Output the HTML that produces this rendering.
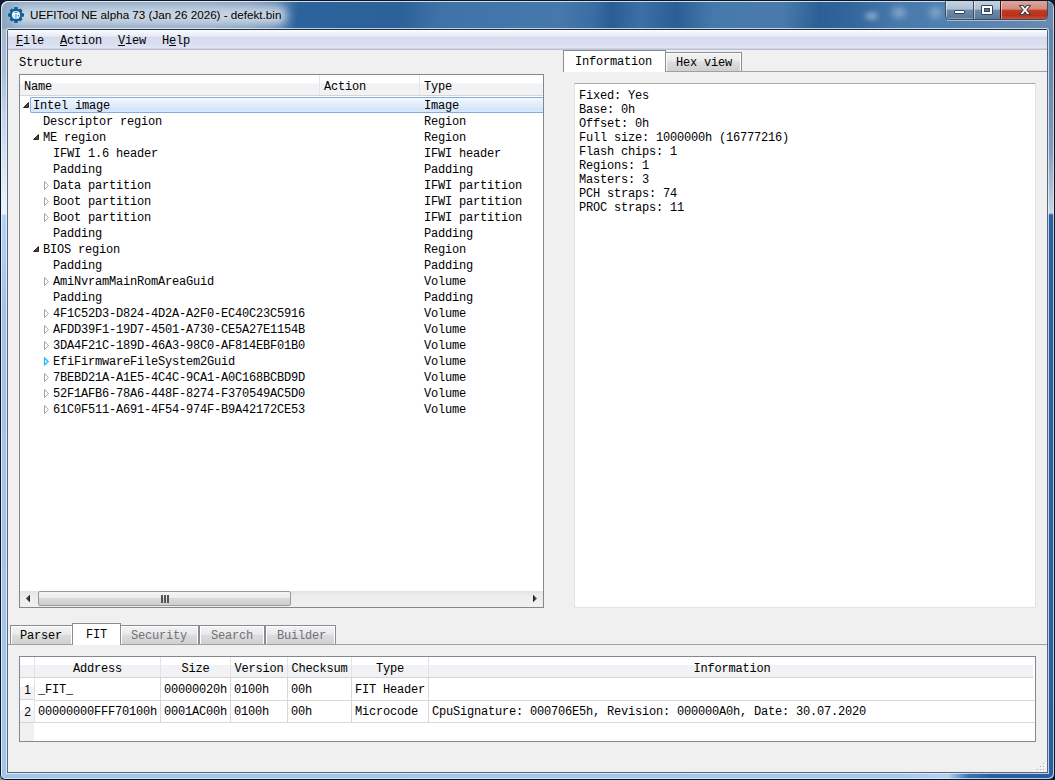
<!DOCTYPE html>
<html><head><meta charset="utf-8">
<style>
*{margin:0;padding:0;box-sizing:border-box}
html,body{width:1055px;height:780px;overflow:hidden;background:#0d1c30}
body{position:relative;font-family:"Liberation Mono",monospace;font-size:12px;letter-spacing:-0.2px;color:#000}
.a{position:absolute}
.t{position:absolute;white-space:pre;line-height:16px;height:16px;margin-top:1px}
.s{font-family:"Liberation Sans",sans-serif;letter-spacing:0;margin-top:0}
/* window frame */
#win{left:0;top:0;width:1055px;height:780px;border-radius:8px 8px 6px 6px;background:#0c1624}
#frame{left:1px;top:1px;width:1053px;height:778px;border-radius:7px 7px 5px 5px;overflow:hidden;background:#a4c5e9}
#title{left:0;top:0;width:1053px;height:28px;overflow:hidden;
 background:linear-gradient(93deg,#8ea7c2 0px,#8da6c2 200px,#7c99bb 250px,#4f7cab 283px,#2d639c 297px,#2c6199 400px,#3f73a8 440px,#4678ab 560px,#3a6da3 592px,#2a5d93 610px,#3b6fa5 640px,#2b5e94 675px,#4679ab 712px,#4a7bac 780px,#2c5f95 818px,#33669c 850px,#4677aa 890px,#4f80b0 940px,#6a8aae 1053px)}
#glow{left:10px;top:5px;width:276px;height:19px;background:#c8d5e3;filter:blur(5px);border-radius:10px}
#lframe{left:0;top:28px;width:6px;height:750px;background:linear-gradient(#a4bad2 0px,#a9bed6 40px,#c8daee 100px,#e6f0fb 170px,#e9f2fc 185px,#b2d3f7 186px,#a3c3e6 280px,#a2c4e8 750px)}
#rframe{left:1047px;top:28px;width:6px;height:750px;background:linear-gradient(#5f84ac 0px,#6c8cb0 60px,#7f9cbc 120px,#c8d6e4 184px,#2862a2 186px,#2660a0 750px)}
#bframe{left:0;top:772px;width:1053px;height:6px;background:linear-gradient(90deg,#a3c5e9 0,#a6c8ec 900px,#b3d2f2 947px,#3a74b0 967px,#2660a0 990px,#2660a0 1053px)}
#hl{left:0;top:0;width:1053px;height:778px;border-radius:7px 7px 5px 5px;box-shadow:inset 1px 1px 0 rgba(235,243,252,.85),inset -1px -1px 0 rgba(220,232,245,.8)}
#client{left:7px;top:29px;width:1041px;height:744px;background:#f0f0f0;border:1px solid #56657a;border-top-color:#1e2e40;border-radius:2px 2px 0 0;box-shadow:0 0 0 1px rgba(236,244,252,.75)}
/* menu */
#menu{left:8px;top:30px;width:1039px;height:20px;background:linear-gradient(#ffffff 0px,#f4f6fb 2px,#e9ecf6 6px,#d6dcee 7px,#dae0f1 15px,#e2e7f5 18px,#b9c0d2 19px,#b9c0d2 20px)}
.mi{top:33px;line-height:14px;height:14px}
.ul{text-decoration:underline;text-underline-offset:1px}
/* tree */
#tree{left:19px;top:74px;width:525px;height:534px;background:#fff;border:1px solid #828790}
#thead{left:20px;top:75px;width:523px;height:21px;background:linear-gradient(#ffffff 0,#ffffff 8px,#f1f2f4 9px,#f1f2f4 20px,#d5d5d5 20px)}
.hsep{width:1px;background:#e3e5e8}
#sel{left:30px;top:97px;width:513px;height:16px;border:1px solid #84acdd;border-right:none;border-radius:2px 0 0 2px;background:linear-gradient(#f3f8fe 0,#e4effc 40%,#d2e4f9 85%,#dcebfb 100%)}
.tri{width:0;height:0}
/* scroll */
#hsb{left:20px;top:591px;width:523px;height:16px;background:linear-gradient(#e3e3e3,#ededed 30%,#f0f0f0)}
#thumb{left:38px;top:591px;width:253px;height:15px;border:1px solid #999;border-radius:2px;background:linear-gradient(#f6f6f6 0,#ececec 45%,#d9d9d9 50%,#cfcfcf 100%)}
/* right tabs */
#tabInfo{left:563px;top:50px;width:103px;height:22px;background:#fff;border:1px solid #898c95;border-bottom:none}
#tabHex{left:665px;top:52px;width:77px;height:19px;border:1px solid #898c95;border-bottom:none;background:linear-gradient(#f2f2f2 0,#ebebeb 45%,#dddddd 50%,#d0d0d0 100%);box-shadow:inset 1px 1px 0 #fff,inset -1px 0 0 #fff}
#info{left:574px;top:83px;width:462px;height:525px;background:#fff;border:1px solid #dfe3ea;border-top:1px solid #a9a9a9}
/* bottom tabs */
.btab{height:19px;top:625px;border:1px solid #898c95;border-bottom:none;background:linear-gradient(#f2f2f2 0,#ebebeb 45%,#dddddd 50%,#d0d0d0 100%);box-shadow:inset 1px 1px 0 #fff,inset -1px 0 0 #fff}
.dis{color:#737078}
/* table */
#tbl{left:19px;top:656px;width:1017px;height:86px;background:#fff;border:1px solid #828790}
</style></head><body>
<div id="win" class="a"></div>
<div class="a" style="left:0;top:772px;width:8px;height:8px;background:#8a8a8a"></div>
<div id="win2" class="a" style="left:0;top:0;width:1055px;height:780px;border-radius:8px 8px 6px 6px;background:#0c1624"></div>
<div id="frame" class="a">
 <div id="title" class="a"><div id="glow" class="a"></div>
  <div class="a" style="left:864px;top:11px;width:13px;height:8px;border-radius:50%;background:rgba(190,210,232,.55);filter:blur(2.5px)"></div>
  <div class="a" style="left:891px;top:6px;width:14px;height:11px;border-radius:50%;background:rgba(190,210,232,.5);filter:blur(3px)"></div>
  <div class="a" style="left:928px;top:6px;width:13px;height:11px;border-radius:50%;background:rgba(190,210,232,.45);filter:blur(3px)"></div>
 </div>
 <div id="lframe" class="a"></div>
 <div id="rframe" class="a"></div>
 <div id="bframe" class="a"></div>
 <div id="hl" class="a"></div>
</div>
<div id="client" class="a"></div>

<!-- title content -->
<svg class="a" style="left:7px;top:6px" width="18" height="18" viewBox="0 0 18 18">
 <g fill="#0e5f9d">
  <circle cx="9" cy="9" r="6.4"/>
  <rect x="7.3" y="1" width="3.4" height="16" rx="0.6"/>
  <rect x="1" y="7.3" width="16" height="3.4" rx="0.6"/>
  <rect x="7.3" y="1.3" width="3.4" height="15.4" rx="0.6" transform="rotate(45 9 9)"/>
  <rect x="7.3" y="1.3" width="3.4" height="15.4" rx="0.6" transform="rotate(-45 9 9)"/>
 </g>
 <circle cx="9" cy="9" r="4.1" fill="#f2f6fa"/>
 <rect x="7.6" y="5.9" width="2.8" height="1" fill="#3d80b5"/>
 <rect x="8.4" y="8" width="1.1" height="4.6" fill="#5d96c2"/>
 <circle cx="11.4" cy="9.7" r="0.8" fill="#1a6aa5"/>
 <path d="M5.4 10.5 Q6.5 8.5 7.6 10.5" stroke="#8fb6d6" stroke-width="0.7" fill="none"/>
</svg>
<div class="t s" style="left:30px;top:7px;font-size:11.67px;line-height:16px;color:#000">UEFITool NE alpha 73 (Jan 26 2026) - defekt.bin</div>

<!-- window buttons -->
<div id="btns" class="a" style="left:945px;top:1px;width:103px;height:19px;border:1px solid #3a4c60;border-top:none;border-radius:0 0 5px 5px;overflow:hidden">
 <div class="a" style="left:0;top:0;width:27px;height:18px;background:linear-gradient(#c5d3e2 0,#aebfd2 45%,#6e8aa8 52%,#5b7898 100%);box-shadow:inset 1px 0 0 rgba(255,255,255,.5),inset 0 -1px 0 rgba(255,255,255,.3)"></div>
 <div class="a" style="left:27px;top:0;width:1px;height:18px;background:#3a4c60"></div>
 <div class="a" style="left:28px;top:0;width:26px;height:18px;background:linear-gradient(#c5d3e2 0,#aebfd2 45%,#6e8aa8 52%,#5b7898 100%);box-shadow:inset 1px 0 0 rgba(255,255,255,.5)"></div>
 <div class="a" style="left:54px;top:0;width:1px;height:18px;background:#3a1010"></div>
 <div class="a" style="left:55px;top:0;width:48px;height:18px;background:linear-gradient(#e0a59c 0,#d38a7e 45%,#c43a22 52%,#b8301c 80%,#c85038 100%);box-shadow:inset 1px 0 0 rgba(255,255,255,.5)"></div>
</div>
<div class="a" style="left:947px;top:20px;width:99px;height:1px;background:rgba(230,240,250,.55)"></div>
<div class="a" style="left:954px;top:10px;width:11px;height:4px;background:#fff;border:1px solid #33475c;border-radius:1px"></div>
<div class="a" style="left:981px;top:5px;width:12px;height:10px;background:#fff;border:1px solid #33475c;border-radius:1px"></div>
<div class="a" style="left:984px;top:8px;width:6px;height:4px;background:#5a7494;border:1px solid #33475c"></div>
<svg class="a" style="left:1018px;top:4px" width="14" height="12" viewBox="0 0 14 12">
 <path d="M1.5 1.5 L5.2 1.5 L7 3.8 L8.8 1.5 L12.5 1.5 L8.9 6 L12.5 10.5 L8.8 10.5 L7 8.2 L5.2 10.5 L1.5 10.5 L5.1 6Z" fill="#fafafa" stroke="#3b4250" stroke-width="1.1" stroke-linejoin="round"/>
</svg>

<!-- menu -->
<div id="menu" class="a"></div>
<div class="t mi" style="left:16px"><span class="ul">F</span>ile</div>
<div class="t mi" style="left:60px"><span class="ul">A</span>ction</div>
<div class="t mi" style="left:118px"><span class="ul">V</span>iew</div>
<div class="t mi" style="left:162px">H<span class="ul">e</span>lp</div>

<div class="t" style="left:19px;top:54px">Structure</div>

<!-- tree -->
<div id="tree" class="a"></div>
<div id="thead" class="a"></div>
<div class="a hsep" style="left:319px;top:75px;height:20px"></div>
<div class="a hsep" style="left:419px;top:75px;height:20px"></div>
<div class="t" style="left:24px;top:78px">Name</div>
<div class="t" style="left:324px;top:78px">Action</div>
<div class="t" style="left:424px;top:78px">Type</div>
<div id="sel" class="a"></div>

<div id="rows">
<div class="t" style="left:33px;top:97px">Intel image</div>
<div class="t" style="left:424px;top:97px">Image</div>
<svg class="a" style="left:23px;top:101px" width="8" height="9"><path d="M5.5 1.5 L5.5 6.5 L0.5 6.5Z" fill="#454545" stroke="#2a2a2a" stroke-width="1" stroke-linejoin="round"/></svg>
<div class="t" style="left:43px;top:113px">Descriptor region</div>
<div class="t" style="left:424px;top:113px">Region</div>
<div class="t" style="left:43px;top:129px">ME region</div>
<div class="t" style="left:424px;top:129px">Region</div>
<svg class="a" style="left:33px;top:133px" width="8" height="9"><path d="M5.5 1.5 L5.5 6.5 L0.5 6.5Z" fill="#454545" stroke="#2a2a2a" stroke-width="1" stroke-linejoin="round"/></svg>
<div class="t" style="left:53px;top:145px">IFWI 1.6 header</div>
<div class="t" style="left:424px;top:145px">IFWI header</div>
<div class="t" style="left:53px;top:161px">Padding</div>
<div class="t" style="left:424px;top:161px">Padding</div>
<div class="t" style="left:53px;top:177px">Data partition</div>
<div class="t" style="left:424px;top:177px">IFWI partition</div>
<svg class="a" style="left:43px;top:180px" width="8" height="11"><path d="M1.5 1.5 L5.5 5.5 L1.5 9.5Z" fill="none" stroke="#a6a6a6" stroke-width="1"/></svg>
<div class="t" style="left:53px;top:193px">Boot partition</div>
<div class="t" style="left:424px;top:193px">IFWI partition</div>
<svg class="a" style="left:43px;top:196px" width="8" height="11"><path d="M1.5 1.5 L5.5 5.5 L1.5 9.5Z" fill="none" stroke="#a6a6a6" stroke-width="1"/></svg>
<div class="t" style="left:53px;top:209px">Boot partition</div>
<div class="t" style="left:424px;top:209px">IFWI partition</div>
<svg class="a" style="left:43px;top:212px" width="8" height="11"><path d="M1.5 1.5 L5.5 5.5 L1.5 9.5Z" fill="none" stroke="#a6a6a6" stroke-width="1"/></svg>
<div class="t" style="left:53px;top:225px">Padding</div>
<div class="t" style="left:424px;top:225px">Padding</div>
<div class="t" style="left:43px;top:241px">BIOS region</div>
<div class="t" style="left:424px;top:241px">Region</div>
<svg class="a" style="left:33px;top:245px" width="8" height="9"><path d="M5.5 1.5 L5.5 6.5 L0.5 6.5Z" fill="#454545" stroke="#2a2a2a" stroke-width="1" stroke-linejoin="round"/></svg>
<div class="t" style="left:53px;top:257px">Padding</div>
<div class="t" style="left:424px;top:257px">Padding</div>
<div class="t" style="left:53px;top:273px">AmiNvramMainRomAreaGuid</div>
<div class="t" style="left:424px;top:273px">Volume</div>
<svg class="a" style="left:43px;top:276px" width="8" height="11"><path d="M1.5 1.5 L5.5 5.5 L1.5 9.5Z" fill="none" stroke="#a6a6a6" stroke-width="1"/></svg>
<div class="t" style="left:53px;top:289px">Padding</div>
<div class="t" style="left:424px;top:289px">Padding</div>
<div class="t" style="left:53px;top:305px">4F1C52D3-D824-4D2A-A2F0-EC40C23C5916</div>
<div class="t" style="left:424px;top:305px">Volume</div>
<svg class="a" style="left:43px;top:308px" width="8" height="11"><path d="M1.5 1.5 L5.5 5.5 L1.5 9.5Z" fill="none" stroke="#a6a6a6" stroke-width="1"/></svg>
<div class="t" style="left:53px;top:321px">AFDD39F1-19D7-4501-A730-CE5A27E1154B</div>
<div class="t" style="left:424px;top:321px">Volume</div>
<svg class="a" style="left:43px;top:324px" width="8" height="11"><path d="M1.5 1.5 L5.5 5.5 L1.5 9.5Z" fill="none" stroke="#a6a6a6" stroke-width="1"/></svg>
<div class="t" style="left:53px;top:337px">3DA4F21C-189D-46A3-98C0-AF814EBF01B0</div>
<div class="t" style="left:424px;top:337px">Volume</div>
<svg class="a" style="left:43px;top:340px" width="8" height="11"><path d="M1.5 1.5 L5.5 5.5 L1.5 9.5Z" fill="none" stroke="#a6a6a6" stroke-width="1"/></svg>
<div class="t" style="left:53px;top:353px">EfiFirmwareFileSystem2Guid</div>
<div class="t" style="left:424px;top:353px">Volume</div>
<svg class="a" style="left:39px;top:352px" width="16" height="19"><defs><radialGradient id="g"><stop offset="0" stop-color="#d8eefb"/><stop offset="1" stop-color="#fff" stop-opacity="0"/></radialGradient></defs><ellipse cx="7" cy="9.5" rx="6.5" ry="7.5" fill="url(#g)"/><path d="M5.5 6 L9.3 9.5 L5.5 13Z" fill="none" stroke="#27b9f1" stroke-width="1.15"/></svg>
<div class="t" style="left:53px;top:369px">7BEBD21A-A1E5-4C4C-9CA1-A0C168BCBD9D</div>
<div class="t" style="left:424px;top:369px">Volume</div>
<svg class="a" style="left:43px;top:372px" width="8" height="11"><path d="M1.5 1.5 L5.5 5.5 L1.5 9.5Z" fill="none" stroke="#a6a6a6" stroke-width="1"/></svg>
<div class="t" style="left:53px;top:385px">52F1AFB6-78A6-448F-8274-F370549AC5D0</div>
<div class="t" style="left:424px;top:385px">Volume</div>
<svg class="a" style="left:43px;top:388px" width="8" height="11"><path d="M1.5 1.5 L5.5 5.5 L1.5 9.5Z" fill="none" stroke="#a6a6a6" stroke-width="1"/></svg>
<div class="t" style="left:53px;top:401px">61C0F511-A691-4F54-974F-B9A42172CE53</div>
<div class="t" style="left:424px;top:401px">Volume</div>
<svg class="a" style="left:43px;top:404px" width="8" height="11"><path d="M1.5 1.5 L5.5 5.5 L1.5 9.5Z" fill="none" stroke="#a6a6a6" stroke-width="1"/></svg>
</div>

<!-- h scrollbar -->
<div id="hsb" class="a"></div>
<div id="thumb" class="a"></div>
<svg class="a" style="left:25px;top:594px" width="6" height="9"><defs><linearGradient id="al" x1="0" x2="1"><stop offset="0" stop-color="#777"/><stop offset="1" stop-color="#151515"/></linearGradient></defs><path d="M5 0.8 L0.6 4.5 L5 8.2Z" fill="url(#al)"/></svg>
<svg class="a" style="left:532px;top:594px" width="6" height="9"><defs><linearGradient id="ar" x1="0" x2="1"><stop offset="0" stop-color="#151515"/><stop offset="1" stop-color="#777"/></linearGradient></defs><path d="M1 0.8 L5.2 4.5 L1 8.2Z" fill="url(#ar)"/></svg>
<div class="a" style="left:161px;top:595px;width:2px;height:8px;background:#555"></div>
<div class="a" style="left:164px;top:595px;width:2px;height:8px;background:#555"></div>
<div class="a" style="left:167px;top:595px;width:2px;height:8px;background:#555"></div>

<!-- right tabs -->
<div class="a" style="left:563px;top:71px;width:484px;height:1px;background:#a0a0a0"></div>
<div id="tabHex" class="a"></div>
<div id="tabInfo" class="a"></div>
<div class="t" style="left:575px;top:53px">Information</div>
<div class="t" style="left:676px;top:54px">Hex view</div>
<div id="info" class="a"></div>
<div class="a" style="left:579px;top:89px;line-height:14px;white-space:pre">Fixed: Yes
Base: 0h
Offset: 0h
Full size: 1000000h (16777216)
Flash chips: 1
Regions: 1
Masters: 3
PCH straps: 74
PROC straps: 11</div>

<!-- bottom tabs -->
<div class="a" style="left:8px;top:644px;width:1039px;height:1px;background:#a0a0a0"></div>
<div class="a btab" style="left:10px;width:63px"></div>
<div class="a btab" style="left:120px;width:79px"></div>
<div class="a btab" style="left:199px;width:66px"></div>
<div class="a btab" style="left:265px;width:71px"></div>
<div class="a" style="left:72px;top:623px;width:49px;height:22px;background:#fff;border:1px solid #898c95;border-bottom:none"></div>
<div class="t" style="left:20px;top:627px">Parser</div>
<div class="t" style="left:86px;top:626px">FIT</div>
<div class="t dis" style="left:131px;top:627px">Security</div>
<div class="t dis" style="left:211px;top:627px">Search</div>
<div class="t dis" style="left:277px;top:627px">Builder</div>

<!-- table -->
<div id="tbl" class="a"></div>
<div id="tblc">
<div class="a" style="left:20px;top:657px;width:1013px;height:21px;background:linear-gradient(#fff 0,#fff 8px,#f1f2f4 8px,#f1f2f4 20px,#d5d5d5 20px)"></div>
<div class="a" style="left:20px;top:678px;width:14px;height:22px;background:linear-gradient(#fff 0,#fff 9px,#f1f2f4 9px,#f1f2f4 21px,#d5d5d5 21px)"></div>
<div class="a" style="left:20px;top:701px;width:14px;height:22px;background:linear-gradient(#fff 0,#fff 9px,#f1f2f4 9px,#f1f2f4 21px,#d5d5d5 21px)"></div>
<div class="a" style="left:20px;top:723px;width:14px;height:18px;background:#f0f0f0"></div>
<div class="a" style="left:35px;top:700px;width:1000px;height:1px;background:#d8d8d8"></div>
<div class="a" style="left:35px;top:722px;width:1000px;height:1px;background:#d8d8d8"></div>
<div class="a" style="left:34px;top:657px;width:1px;height:66px;background:#e2e3e6"></div>
<div class="a" style="left:160px;top:657px;width:1px;height:20px;background:#e2e3e6"></div>
<div class="a" style="left:160px;top:678px;width:1px;height:44px;background:#d8d8d8"></div>
<div class="a" style="left:230px;top:657px;width:1px;height:20px;background:#e2e3e6"></div>
<div class="a" style="left:230px;top:678px;width:1px;height:44px;background:#d8d8d8"></div>
<div class="a" style="left:287px;top:657px;width:1px;height:20px;background:#e2e3e6"></div>
<div class="a" style="left:287px;top:678px;width:1px;height:44px;background:#d8d8d8"></div>
<div class="a" style="left:351px;top:657px;width:1px;height:20px;background:#e2e3e6"></div>
<div class="a" style="left:351px;top:678px;width:1px;height:44px;background:#d8d8d8"></div>
<div class="a" style="left:428px;top:657px;width:1px;height:20px;background:#e2e3e6"></div>
<div class="a" style="left:428px;top:678px;width:1px;height:44px;background:#d8d8d8"></div>
<div class="t" style="left:35px;width:125px;text-align:center;top:660px">Address</div>
<div class="t" style="left:161px;width:69px;text-align:center;top:660px">Size</div>
<div class="t" style="left:231px;width:56px;text-align:center;top:660px">Version</div>
<div class="t" style="left:288px;width:63px;text-align:center;top:660px">Checksum</div>
<div class="t" style="left:352px;width:76px;text-align:center;top:660px">Type</div>
<div class="t" style="left:429px;width:606px;text-align:center;top:660px">Information</div>
<div class="t s" style="left:22px;width:11px;text-align:center;top:682px;font-size:12px">1</div>
<div class="t" style="left:38px;top:681px">_FIT_</div>
<div class="t" style="left:164px;top:681px">00000020h</div>
<div class="t" style="left:234px;top:681px">0100h</div>
<div class="t" style="left:291px;top:681px">00h</div>
<div class="t" style="left:355px;top:681px">FIT Header</div>
<div class="t s" style="left:22px;width:11px;text-align:center;top:704px;font-size:12px">2</div>
<div class="t" style="left:38px;top:703px">00000000FFF70100h</div>
<div class="t" style="left:164px;top:703px">0001AC00h</div>
<div class="t" style="left:234px;top:703px">0100h</div>
<div class="t" style="left:291px;top:703px">00h</div>
<div class="t" style="left:355px;top:703px">Microcode</div>
<div class="t" style="left:432px;top:703px">CpuSignature: 000706E5h, Revision: 000000A0h, Date: 30.07.2020</div>
</div>

<!-- size grip -->
<svg class="a" style="left:1035px;top:761px" width="12" height="12">
 <g fill="#fff"><rect x="9" y="3" width="1" height="1"/><rect x="6" y="6" width="1" height="1"/><rect x="9" y="6" width="1" height="1"/><rect x="3" y="9" width="1" height="1"/><rect x="6" y="9" width="1" height="1"/><rect x="9" y="9" width="1" height="1"/></g>
 <g fill="#a8a8a8"><rect x="8" y="2" width="1" height="1"/><rect x="5" y="5" width="1" height="1"/><rect x="8" y="5" width="1" height="1"/><rect x="2" y="8" width="1" height="1"/><rect x="5" y="8" width="1" height="1"/><rect x="8" y="8" width="1" height="1"/></g>
</svg>
</body></html>
